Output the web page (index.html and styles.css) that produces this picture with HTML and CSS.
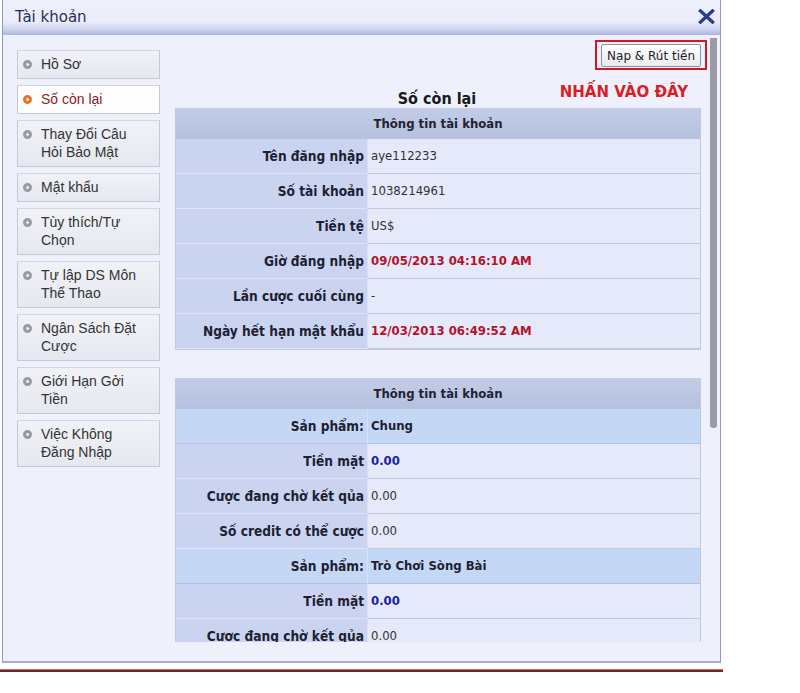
FILE: index.html
```html
<!DOCTYPE html>
<html lang="vi">
<head>
<meta charset="utf-8">
<title>Tài khoản</title>
<link rel="stylesheet" href="styles.css">
</head>
<body>
<div class="window">
  <div class="titlebar">
    <span class="title">Tài khoản</span>
    <svg class="close" width="17" height="15" viewBox="0 0 17 15"><path d="M2.5 2 L14.5 13 M14.5 2 L2.5 13" stroke="#2b3c8c" stroke-width="3.4" stroke-linecap="square" fill="none"/></svg>
  </div>
  <div class="body">
    <ul class="menu">
      <li><svg class="bullet" viewBox="0 0 10 10"><circle cx="5" cy="5" r="4.6" class="ball"/><path d="M4 2.8 L7.2 5 L4 7.2 Z" fill="#fff"/></svg><span>Hồ Sơ</span></li>
      <li class="active"><svg class="bullet" viewBox="0 0 10 10"><circle cx="5" cy="5" r="4.6" class="ball"/><path d="M4 2.8 L7.2 5 L4 7.2 Z" fill="#fff"/></svg><span>Số còn lại</span></li>
      <li><svg class="bullet" viewBox="0 0 10 10"><circle cx="5" cy="5" r="4.6" class="ball"/><path d="M4 2.8 L7.2 5 L4 7.2 Z" fill="#fff"/></svg><span>Thay Đổi Câu<br>Hỏi Bảo Mật</span></li>
      <li><svg class="bullet" viewBox="0 0 10 10"><circle cx="5" cy="5" r="4.6" class="ball"/><path d="M4 2.8 L7.2 5 L4 7.2 Z" fill="#fff"/></svg><span>Mật khẩu</span></li>
      <li><svg class="bullet" viewBox="0 0 10 10"><circle cx="5" cy="5" r="4.6" class="ball"/><path d="M4 2.8 L7.2 5 L4 7.2 Z" fill="#fff"/></svg><span>Tùy thích/Tự<br>Chọn</span></li>
      <li><svg class="bullet" viewBox="0 0 10 10"><circle cx="5" cy="5" r="4.6" class="ball"/><path d="M4 2.8 L7.2 5 L4 7.2 Z" fill="#fff"/></svg><span>Tự lập DS Môn<br>Thể Thao</span></li>
      <li><svg class="bullet" viewBox="0 0 10 10"><circle cx="5" cy="5" r="4.6" class="ball"/><path d="M4 2.8 L7.2 5 L4 7.2 Z" fill="#fff"/></svg><span>Ngân Sách Đặt<br>Cược</span></li>
      <li><svg class="bullet" viewBox="0 0 10 10"><circle cx="5" cy="5" r="4.6" class="ball"/><path d="M4 2.8 L7.2 5 L4 7.2 Z" fill="#fff"/></svg><span>Giới Hạn Gởi<br>Tiền</span></li>
      <li><svg class="bullet" viewBox="0 0 10 10"><circle cx="5" cy="5" r="4.6" class="ball"/><path d="M4 2.8 L7.2 5 L4 7.2 Z" fill="#fff"/></svg><span>Việc Không<br>Đăng Nhập</span></li>
    </ul>
    <div class="main">
      <div class="toprow">
        <div class="callout"><button class="btn">Nạp &amp; Rút tiền</button></div>
      </div>
      <div class="heading-row">
        <h2 class="heading">Số còn lại</h2>
        <span class="note">NHẤN VÀO ĐÂY</span>
      </div>
      <div class="info">
        <div class="head">Thông tin tài khoản</div>
        <div class="row"><div class="lbl">Tên đăng nhập</div><div class="val">aye112233</div></div>
        <div class="row"><div class="lbl">Số tài khoản</div><div class="val">1038214961</div></div>
        <div class="row"><div class="lbl">Tiền tệ</div><div class="val">US$</div></div>
        <div class="row"><div class="lbl">Giờ đăng nhập</div><div class="val red">09/05/2013 04:16:10 AM</div></div>
        <div class="row"><div class="lbl">Lần cược cuối cùng</div><div class="val">-</div></div>
        <div class="row"><div class="lbl">Ngày hết hạn mật khẩu</div><div class="val red">12/03/2013 06:49:52 AM</div></div>
      </div>
      <div class="info second">
        <div class="head">Thông tin tài khoản</div>
        <div class="row product"><div class="lbl">Sản phẩm:</div><div class="val bold">Chung</div></div>
        <div class="row"><div class="lbl">Tiền mặt</div><div class="val blue">0.00</div></div>
        <div class="row"><div class="lbl">Cược đang chờ kết qủa</div><div class="val">0.00</div></div>
        <div class="row"><div class="lbl">Số credit có thể cược</div><div class="val">0.00</div></div>
        <div class="row product"><div class="lbl">Sản phẩm:</div><div class="val bold">Trò Chơi Sòng Bài</div></div>
        <div class="row"><div class="lbl">Tiền mặt</div><div class="val blue">0.00</div></div>
        <div class="row"><div class="lbl">Cược đang chờ kết qủa</div><div class="val">0.00</div></div>
      </div>
    </div>
    <div class="scrollbar"><div class="thumb"></div></div>
  </div>
</div>
<div class="redline"></div>
</body>
</html>
```

FILE: styles.css
```css
body {
  margin: 0;
  background: #ffffff;
  font-family: "DejaVu Sans", sans-serif;
}

.window {
  margin-left: 2px;
  width: 717px;
  border-left: 1px solid #8d9bcb;
  border-right: 1px solid #8d9bcb;
  background: #eef0fb;
}

.titlebar {
  height: 35px;
  box-sizing: border-box;
  display: flex;
  align-items: center;
  justify-content: space-between;
  padding: 0 5px 2px 12px;
  background: linear-gradient(#eff1fc 0%, #e9ecf9 62%, #cdd4ee 84%, #aab5dc 100%);
}

.title {
  font: 15px "DejaVu Sans", sans-serif;
  color: #2a3150;
}

.close {
  display: block;
}

.body {
  display: flex;
  height: 628px;
  box-sizing: border-box;
  border-bottom: 2px solid #a2b0d6;
}

.menu {
  list-style: none;
  margin: 15px 0 0 14px;
  padding: 0;
  width: 143px;
  flex: none;
  display: flex;
  flex-direction: column;
  gap: 6px;
}

.menu li {
  display: flex;
  align-items: flex-start;
  gap: 9px;
  padding: 4px 4px 5px 5px;
  border: 1px solid #c5c8d5;
  border-top-color: #d3d6e0;
  background: linear-gradient(#f1f2f7, #e6e8f0);
  font: 14px/18px "Liberation Sans", Arial, sans-serif;
  color: #333333;
  white-space: nowrap;
}

.menu li.active {
  background: #fdfdfe;
  color: #8b1d1d;
}

.bullet {
  width: 9px;
  height: 9px;
  flex: none;
  margin-top: 5px;
}

.ball {
  fill: #979ba6;
  stroke: #858a96;
  stroke-width: 0.6;
}

.active .ball {
  fill: #e8742c;
  stroke: #d45f1c;
}

.main {
  margin-left: 15px;
  width: 534px;
  flex: none;
  height: 607px;
  box-sizing: border-box;
  padding-top: 5px;
  overflow: hidden;
}

.toprow {
  display: flex;
  justify-content: flex-end;
  padding-right: 2px;
}

.callout {
  border: 2px solid #d3161f;
  padding: 2px 4px 1px 4px;
}

.btn {
  display: block;
  height: 23px;
  padding: 0 5px;
  border: 1px solid #8c95a8;
  border-radius: 2px;
  background: linear-gradient(#ffffff, #e8eaef);
  font: 12px "DejaVu Sans", sans-serif;
  color: #222;
}

.heading-row {
  width: 524px;
  height: 38px;
  display: grid;
  grid-template-columns: 1fr auto 1fr;
}

.heading {
  grid-column: 2;
  align-self: end;
  margin: 0;
  font: bold 16px/18px "DejaVu Sans Condensed", "DejaVu Sans", sans-serif;
  color: #1a1a1a;
}

.note {
  grid-column: 3;
  justify-self: end;
  align-self: start;
  margin: 14px 11px 0 0;
  font: bold 15px/16px "DejaVu Sans", sans-serif;
  color: #d81f26;
}

.info {
  width: 524px;
  border: 1px solid #c2c9df;
  border-top: none;
  font: 13px "DejaVu Sans Condensed", "DejaVu Sans", sans-serif;
  color: #333;
}

.info.second {
  margin-top: 28px;
}

.head {
  height: 31px;
  line-height: 30px;
  text-align: center;
  font-weight: bold;
  color: #1f2333;
  background: linear-gradient(#c3cce6, #b6c1df);
  border-top: 1px solid #c6cde4;
  box-sizing: border-box;
}

.row {
  display: grid;
  grid-template-columns: 191px 1fr;
  height: 35px;
}

.lbl,
.val {
  box-sizing: border-box;
  line-height: 34px;
  white-space: nowrap;
}

.lbl {
  text-align: right;
  padding-right: 3px;
  font-weight: bold;
  font-size: 13.6px;
  color: #1d2131;
  background: #cad4f1;
  border-bottom: 1px solid #dfe5f8;
}

.val {
  padding-left: 3px;
  background: #e5e9f9;
  border-left: 1px solid #d9dff4;
  border-bottom: 1px solid #c3c9dd;
}

.row.product .lbl,
.row.product .val {
  background: #c4d8f6;
  border-bottom-color: #b1c2e2;
}

.val.bold {
  font-weight: bold;
  color: #1d2131;
}

.val.red {
  font-weight: bold;
  color: #b5122b;
}

.val.blue {
  font-weight: bold;
  color: #1b1ea0;
}

.scrollbar {
  margin-left: 1px;
  width: 7px;
  flex: none;
  padding-top: 3px;
}

.thumb {
  height: 390px;
  background: #9a9ca5;
  border-radius: 0 0 3px 3px;
}

.redline {
  margin-top: 6px;
  width: 723px;
  height: 3px;
  box-sizing: border-box;
  border-top: 1px solid #b07a7a;
  background: #7d2222;
}
```
